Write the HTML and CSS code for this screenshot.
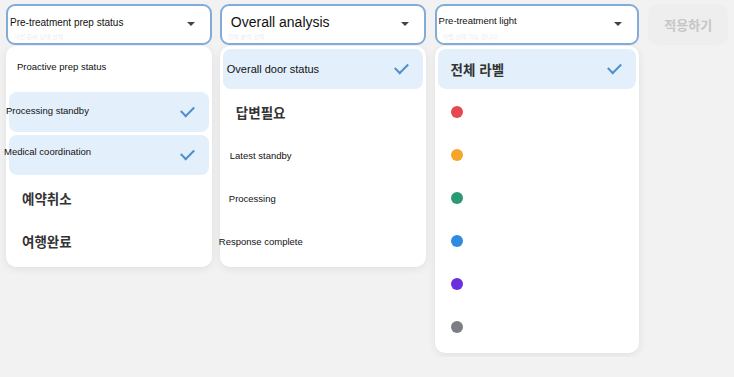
FILE: index.html
```html
<!DOCTYPE html>
<html lang="ko">
<head>
    <meta charset="UTF-8">
    <meta name="viewport" content="width=device-width, initial-scale=1.0">
    <link rel="stylesheet" href="styles.css">
    <title>필터</title>
</head>
<body>
    <div class="filtros">

        <!-- Estado de preparación -->
        <div class="columna">
            <div class="selector">
                <span class="valor pequeno">Pre-treatment prep status</span>
                <span class="flecha"></span>
                <span class="fantasma">사전 준비 상태 선택</span>
            </div>
            <ul class="lista">
                <li class="opcion"><span class="etiqueta en corre-5">Proactive prep status</span></li>
                <li class="opcion activa"><span class="etiqueta en corre-16">Processing standby</span><span class="check"></span></li>
                <li class="opcion activa"><span class="etiqueta en corre-18">Medical coordination</span><span class="check"></span></li>
                <li class="opcion"><span class="etiqueta ko">예약취소</span></li>
                <li class="opcion"><span class="etiqueta ko">여행완료</span></li>
            </ul>
        </div>

        <!-- Análisis -->
        <div class="columna">
            <div class="selector">
                <span class="valor grande">Overall analysis</span>
                <span class="flecha"></span>
                <span class="fantasma">전체 분석 선택</span>
            </div>
            <ul class="lista">
                <li class="opcion activa"><span class="etiqueta en medio corre-8">Overall door status</span><span class="check"></span></li>
                <li class="opcion"><span class="etiqueta ko">답변필요</span></li>
                <li class="opcion"><span class="etiqueta en corre-6">Latest standby</span></li>
                <li class="opcion"><span class="etiqueta en corre-7">Processing</span></li>
                <li class="opcion"><span class="etiqueta en corre-17">Response complete</span></li>
            </ul>
        </div>

        <!-- Luz -->
        <div class="columna">
            <div class="selector">
                <span class="valor mini">Pre-treatment light</span>
                <span class="flecha"></span>
                <span class="fantasma">라벨 선택 가능 합니다</span>
            </div>
            <ul class="lista">
                <li class="opcion activa"><span class="etiqueta ko">전체 라벨</span><span class="check"></span></li>
                <li class="opcion"><span class="punto rojo"></span></li>
                <li class="opcion"><span class="punto naranja"></span></li>
                <li class="opcion"><span class="punto verde"></span></li>
                <li class="opcion"><span class="punto azul"></span></li>
                <li class="opcion"><span class="punto morado"></span></li>
                <li class="opcion"><span class="punto gris"></span></li>
            </ul>
        </div>

        <button class="aplicar" disabled>적용하기</button>
    </div>
</body>
</html>
```

FILE: styles.css
```css
body {
    margin: 0;
    background-color: #f2f2f2;
    font-family: "Liberation Sans", Arial, "Noto Sans CJK KR", sans-serif;
    color: #111;
}

.filtros {
    display: flex;
    align-items: flex-start;
    padding: 4px 6px;
    gap: 8px;
}

.columna {
    width: 207px;
    display: flex;
    flex-direction: column;
}

.columna:nth-child(3) {
    margin-left: 1px;
    width: 206px;
}

.selector {
    position: relative;
    box-sizing: border-box;
    height: 41px;
    border: 2px solid #82acd8;
    border-radius: 9px;
    background-color: #fff;
    display: flex;
    align-items: center;
    padding: 0 15px 4px 2px;
}

.valor {
    flex: 1;
    white-space: nowrap;
}

.valor.pequeno {
    font-size: 10px;
}

.valor.grande {
    font-size: 14px;
    padding-left: 7px;
    padding-bottom: 1px;
}

.valor.mini {
    font-size: 9.5px;
    padding-bottom: 4px;
}

.flecha {
    width: 0;
    height: 0;
    border-left: 4px solid transparent;
    border-right: 4px solid transparent;
    border-top: 4px solid #444;
    margin-top: 3px;
}

.fantasma {
    position: absolute;
    left: 6px;
    bottom: 2px;
    font-size: 6px;
    color: #ededed;
}

.lista {
    list-style: none;
    margin: 1px 0 0;
    padding: 3px 3px 6px;
    background-color: #fff;
    border-radius: 10px;
    box-shadow: 0 2px 8px rgba(0, 0, 0, 0.08);
    display: flex;
    flex-direction: column;
    gap: 3px;
}

.opcion {
    height: 40px;
    border-radius: 8px;
    display: flex;
    align-items: center;
    padding: 0 15px 0 13px;
}

.opcion.activa {
    background-color: #e3f0fb;
}

.etiqueta {
    flex: 1;
    white-space: nowrap;
}

.etiqueta.en {
    font-size: 9.5px;
}

.etiqueta.en.medio {
    font-size: 11px;
}

.etiqueta.ko {
    font-family: "Noto Sans CJK KR", sans-serif;
    font-size: 13.5px;
    font-weight: 700;
    color: #333;
}

.corre-5 { margin-left: -5px; margin-top: -6px; }
.corre-6 { margin-left: -6px; }
.corre-7 { margin-left: -7px; }
.corre-8 { margin-left: -9px; }
.corre-16 { margin-left: -16px; margin-top: -4px; }
.corre-17 { margin-left: -17px; }
.corre-18 { margin-left: -18px; margin-top: -7px; }

.check {
    width: 11px;
    height: 6px;
    border-left: 2px solid #4f8fcd;
    border-bottom: 2px solid #4f8fcd;
    transform: rotate(-45deg);
    margin-top: -4px;
}

.punto {
    width: 12px;
    height: 12px;
    border-radius: 50%;
}

.rojo { background-color: #e5484d; }
.naranja { background-color: #f4a52a; }
.verde { background-color: #2a9a76; }
.azul { background-color: #2f8be0; }
.morado { background-color: #6b2fe0; }
.gris { background-color: #7b7e82; }

.aplicar {
    margin-left: 1px;
    width: 80px;
    height: 41px;
    border: none;
    border-radius: 10px;
    background-color: #eeeeee;
    color: #c6c6c6;
    font-family: "Noto Sans CJK KR", sans-serif;
    font-size: 13px;
    font-weight: 700;
}
```
